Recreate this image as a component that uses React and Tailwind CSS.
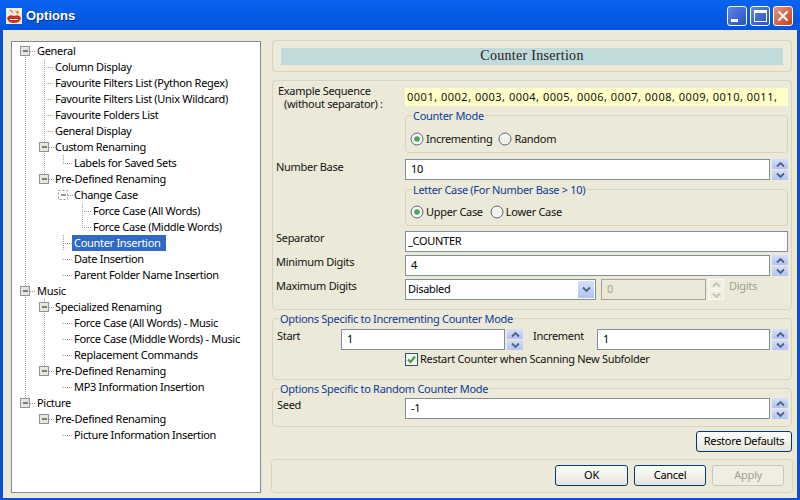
import React from 'react'

const ROWS = [
  { t: 'General', d: 0, box: 1, half2: [25] },
  { t: 'Column Display', d: 1, v: [25, 44] },
  { t: 'Favourite Filters List (Python Regex)', d: 1, v: [25, 44] },
  { t: 'Favourite Filters List (Unix Wildcard)', d: 1, v: [25, 44] },
  { t: 'Favourite Folders List', d: 1, v: [25, 44] },
  { t: 'General Display', d: 1, v: [25, 44] },
  { t: 'Custom Renaming', d: 1, box: 1, v: [25, 44] },
  { t: 'Labels for Saved Sets', d: 2, v: [25, 44], half: [63] },
  { t: 'Pre-Defined Renaming', d: 1, box: 1, v: [25], half: [44] },
  { t: 'Change Case', d: 2, box: 2, v: [25] },
  { t: 'Force Case (All Words)', d: 3, v: [25, 82] },
  { t: 'Force Case (Middle Words)', d: 3, v: [25], half: [82] },
  { t: 'Counter Insertion', d: 2, v: [25, 63], sel: true },
  { t: 'Date Insertion', d: 2, v: [25] },
  { t: 'Parent Folder Name Insertion', d: 2, v: [25] },
  { t: 'Music', d: 0, box: 1, v: [25] },
  { t: 'Specialized Renaming', d: 1, box: 1, v: [25, 44] },
  { t: 'Force Case (All Words) - Music', d: 2, v: [25, 44] },
  { t: 'Force Case (Middle Words) - Music', d: 2, v: [25, 44] },
  { t: 'Replacement Commands', d: 2, v: [25, 44] },
  { t: 'Pre-Defined Renaming', d: 1, box: 1, v: [25], half: [44] },
  { t: 'MP3 Information Insertion', d: 2, v: [25] },
  { t: 'Picture', d: 0, box: 1, half: [25] },
  { t: 'Pre-Defined Renaming', d: 1, box: 1 },
  { t: 'Picture Information Insertion', d: 2 },
]

const TEXT_X = [37, 55, 74, 93]
const BOX_X = [25, 44, 63, 82]

function Guides({ row }) {
  // coordinates are shifted by the 12px where the tree's rows begin
  const w = TEXT_X[row.d] - 12 - (row.sel ? 2 : 0)
  const cx = BOX_X[row.d] - 12
  const lines = '#a0a0a0'
  return (
    <svg width={w} height="16" className="shrink-0">
      {(row.v || []).map((x) => (
        <line key={x} x1={x - 11.5} x2={x - 11.5} y1="0" y2="16" stroke={lines} strokeDasharray="1 1" />
      ))}
      {(row.half || []).map((x) => (
        <line key={x} x1={x - 11.5} x2={x - 11.5} y1="0" y2="8" stroke={lines} strokeDasharray="1 1" />
      ))}
      {(row.half2 || []).map((x) => (
        <line key={x} x1={x - 11.5} x2={x - 11.5} y1="8" y2="16" stroke={lines} strokeDasharray="1 1" />
      ))}
      {!row.box && <line x1={cx} x2={cx + 9} y1="8.5" y2="8.5" stroke={lines} strokeDasharray="1 1" />}
      {row.box === 1 && (
        <g>
          <line x1={cx + 5} x2={cx + 10} y1="8.5" y2="8.5" stroke={lines} strokeDasharray="1 1" />
          <rect x={cx - 4.5} y="3.5" width="9" height="9" fill="#e6e6df" stroke="#8c9599" />
          <line x1={cx - 2} x2={cx + 3} y1="8" y2="8" stroke="#111" />
        </g>
      )}
      {row.box === 2 && (
        <g>
          <line x1={cx + 5} x2={cx + 10} y1="8.5" y2="8.5" stroke={lines} strokeDasharray="1 1" />
          <rect x={cx - 4.5} y="3.5" width="9" height="9" fill="#fff" stroke="#8c9599" strokeDasharray="2 2" />
          <line x1={cx - 2} x2={cx + 3} y1="8" y2="8" stroke="#333" />
        </g>
      )}
    </svg>
  )
}

function Tree() {
  return (
    <div className="w-[250px] shrink-0 border border-[#7f8c94] bg-white pt-px">
      {ROWS.map((r, i) => (
        <div key={i} className="flex h-4 items-center">
          <Guides row={r} />
          <span
            className={
              r.sel
                ? 'bg-[#316ac5] pl-[2px] pr-[5px] leading-4 text-white'
                : 'leading-4 text-black'
            }
          >
            {r.t}
          </span>
        </div>
      ))}
    </div>
  )
}

function Chevron({ up, color = '#4d6185' }) {
  return (
    <svg width="9" height="7" viewBox="0 0 9 7">
      <path
        d={up ? 'M1 5.5 L4.5 2 L8 5.5' : 'M1 1.5 L4.5 5 L8 1.5'}
        fill="none"
        stroke={color}
        strokeWidth="1.8"
      />
    </svg>
  )
}

function Spinner({ disabled }) {
  const half = disabled
    ? 'flex h-[10px] items-center justify-center bg-[#f0eee2] border border-[#fbfaf5]'
    : 'flex h-[10px] items-center justify-center rounded-[1px] bg-gradient-to-b from-[#d5e0f8] to-[#b0c4f2]'
  const c = disabled ? '#c6c4b4' : undefined
  return (
    <div className="ml-[2px] flex h-[21px] w-4 shrink-0 flex-col justify-between">
      <div className={half}>
        <Chevron up color={c} />
      </div>
      <div className={half}>
        <Chevron color={c} />
      </div>
    </div>
  )
}

function Input({ value, className = '', pad = 'pl-[5px]' }) {
  return (
    <div className={'flex h-[21px] items-center border border-[#7f8f9c] bg-white text-black ' + pad + ' ' + className}>
      {value}
    </div>
  )
}

function Radio({ on, label }) {
  return (
    <div className="flex items-center gap-[2px]">
      <svg width="14" height="14" viewBox="0 0 14 14">
        <circle cx="7" cy="7" r="6" fill="#f4f3ec" stroke="#4f6f88" />
        {on && <circle cx="7" cy="7" r="2.8" fill="#4fa35a" />}
      </svg>
      <span>{label}</span>
    </div>
  )
}

function Group({ title, className = '', children }) {
  return (
    <fieldset className={'rounded-[4px] border border-[#d8d4c0] ' + className}>
      <legend className="ml-[6px] px-px text-[#0a3c96] leading-[13px]">{title}</legend>
      {children}
    </fieldset>
  )
}

function Button({ children, disabled, className = '' }) {
  return (
    <div
      className={
        'flex h-[21px] items-center justify-center rounded-[3px] border ' +
        (disabled
          ? 'border-[#c9c7ba] bg-[#f0eee2] text-[#a1a192] '
          : 'border-[#003c74] bg-gradient-to-b from-white to-[#e6e4d8] text-black ') +
        className
      }
    >
      {children}
    </div>
  )
}

function WinButton({ children, red }) {
  return (
    <div
      className={
        'flex h-[20px] w-[20px] items-center justify-center rounded-[3px] border border-white ' +
        (red ? 'bg-gradient-to-br from-[#e8937a] to-[#c63a12]' : 'bg-gradient-to-br from-[#5c86e6] to-[#2a50c8]')
      }
    >
      {children}
    </div>
  )
}

export default function App() {
  return (
    <div className="flex h-[500px] w-[800px] flex-col overflow-hidden bg-[#0a4fd8] font-['Noto_Sans','Liberation_Sans',sans-serif] text-[11px] tracking-[-0.3px] text-[#111]">
      <div className="flex h-[30px] shrink-0 items-center bg-gradient-to-b from-[#0a63ee] to-[#0254dc] pl-[6px] pr-[7px] pt-[2px]">
        <svg width="16" height="16" viewBox="0 0 16 16">
          <rect width="16" height="16" fill="#f1ede4" />
          <path d="M1 10 Q3 6 8 8 Q13 6 15 10 Q14 15 8 15 Q2 15 1 10Z" fill="#c8311f" />
          <path d="M3 2 L8 6 L6 2Z M9 3 L12 7 L13 3Z" fill="#e48a3c" />
          <path d="M4 11h8v1H4z" fill="#fff" />
        </svg>
        <span className="ml-1 font-['Liberation_Sans',sans-serif] text-[13px] font-bold tracking-normal text-white [text-shadow:1px_1px_#0f2c8a]">Options</span>
        <div className="ml-auto flex gap-[3px]">
          <WinButton>
            <div className="mt-[9px] mr-[5px] h-[3px] w-[7px] bg-white" />
          </WinButton>
          <WinButton>
            <div className="h-[12px] w-[13px] border border-t-[3px] border-white" />
          </WinButton>
          <WinButton red>
            <svg width="12" height="12" viewBox="0 0 12 12">
              <path d="M1.5 1.5 L10.5 10.5 M10.5 1.5 L1.5 10.5" stroke="#fff" strokeWidth="2" />
            </svg>
          </WinButton>
        </div>
      </div>

      <div className="mx-[3px] mb-[5px] flex flex-1 gap-[11px] bg-[#ece9d8] pl-2 pt-[11px] pb-[5px]">
        <Tree />
        <div className="-mt-px flex w-[521px] flex-col">
          <div className="flex h-[32px] w-[520px] items-center justify-center rounded-[4px] border border-[#d8d4c0] pl-2 pr-2">
            <div className="flex h-[17px] w-full items-center justify-center bg-[#c1dadb] font-['Liberation_Serif',serif] text-[14px] leading-none tracking-[0.3px] text-[#222]">
              Counter Insertion
            </div>
          </div>

          <div className="mt-2 h-[230px] w-[520px] rounded-[4px] border border-[#d8d4c0] pt-[3px] pr-[3px]">
            <div className="flex h-[26px]">
              <div className="w-[132px] whitespace-nowrap pl-[5px] leading-[13px]">
                Example Sequence
                <br />
                <span className="pl-[6px]">(without separator) :</span>
              </div>
              <div className="mt-1 flex h-[18px] flex-1 items-center overflow-hidden whitespace-nowrap bg-[#ffffc8] pl-[2px] tracking-[0.5px]">
                0001, 0002, 0003, 0004, 0005, 0006, 0007, 0008, 0009, 0010, 0011,
              </div>
            </div>
            <div className="pl-[132px]">
              <Group title="Counter Mode" className="-mt-px h-[44px]">
                <div className="mt-[9px] flex items-center gap-[6px] pl-1">
                  <Radio on label="Incrementing" />
                  <Radio label="Random" />
                </div>
              </Group>
            </div>
            <div className="mt-[6px] flex">
              <div className="w-[132px] pl-[3px] pt-px leading-[13px]">Number Base</div>
              <Input value="10" className="flex-1" />
              <Spinner />
            </div>
            <div className="mt-[3px] pl-[132px]">
              <Group title="Letter Case (For Number Base > 10)" className="h-[43px]">
                <div className="mt-[8px] flex items-center gap-[7px] pl-1">
                  <Radio on label="Upper Case" />
                  <Radio label="Lower Case" />
                </div>
              </Group>
            </div>
            <div className="mt-[5px] flex">
              <div className="w-[132px] pl-[3px] leading-[13px]">Separator</div>
              <Input value="_COUNTER" className="flex-1" pad="pl-[2px]" />
            </div>
            <div className="mt-[3px] flex">
              <div className="w-[132px] pl-[3px] leading-[13px]">Minimum Digits</div>
              <Input value="4" className="flex-1" />
              <Spinner />
            </div>
            <div className="mt-[3px] flex">
              <div className="w-[132px] pl-[3px] leading-[13px]">Maximum Digits</div>
              <div className="flex h-[21px] w-[191px] items-center justify-between border border-[#7f8f9c] bg-white pl-[2px] pr-[1px] text-black">
                Disabled
                <div className="flex h-[17px] w-4 items-center justify-center rounded-[1px] bg-gradient-to-b from-[#d5e0f8] to-[#b0c4f2]">
                  <Chevron />
                </div>
              </div>
              <div className="ml-[5px] flex h-[21px] w-[105px] items-center border border-[#a5a595] bg-[#ebe8d7] pl-[5px] text-[#a1a192]">
                0
              </div>
              <Spinner disabled />
              <span className="ml-[5px] leading-[13px] text-[#a1a192]">Digits</span>
            </div>
          </div>

          <Group title="Options Specific to Incrementing Counter Mode" className="mt-[2px] h-[68px] w-[520px]">
            <div className="mt-1 flex pl-1 pr-[3px]">
              <div className="w-[64px] leading-[13px]">Start</div>
              <Input value="1" className="w-[164px]" />
              <Spinner />
              <div className="ml-[10px] w-[64px] leading-[13px]">Increment</div>
              <Input value="1" className="flex-1" />
              <Spinner />
            </div>
            <div className="mt-px flex items-center gap-[2px] pl-[132px]">
              <div className="flex h-[13px] w-[13px] items-center justify-center border border-[#2c5a68] bg-[#f4f3ec]">
                <svg width="11" height="11" viewBox="0 0 11 11">
                  <path d="M2 5.5 L4.5 8 L9 2.5" fill="none" stroke="#3f9a4a" strokeWidth="2" />
                </svg>
              </div>
              <span>Restart Counter when Scanning New Subfolder</span>
            </div>
          </Group>

          <Group title="Options Specific to Random Counter Mode" className="mt-[2px] h-[45px] w-[520px]">
            <div className="mt-[3px] flex pr-[3px]">
              <div className="w-[132px] pl-1 leading-[13px]">Seed</div>
              <Input value="-1" className="flex-1" />
              <Spinner />
            </div>
          </Group>

          <div className="mt-1 flex w-[520px] justify-end">
            <Button className="w-[96px]">Restore Defaults</Button>
          </div>

          <div className="mt-[7px] -ml-px flex h-[34px] w-[522px] items-center justify-end gap-[6px] rounded-[4px] border border-[#d8d4c0] pr-2 pb-[2px]">
            <Button className="w-[73px]">OK</Button>
            <Button className="w-[72px]">Cancel</Button>
            <Button disabled className="w-[72px]">Apply</Button>
          </div>
        </div>
      </div>
    </div>
  )
}
